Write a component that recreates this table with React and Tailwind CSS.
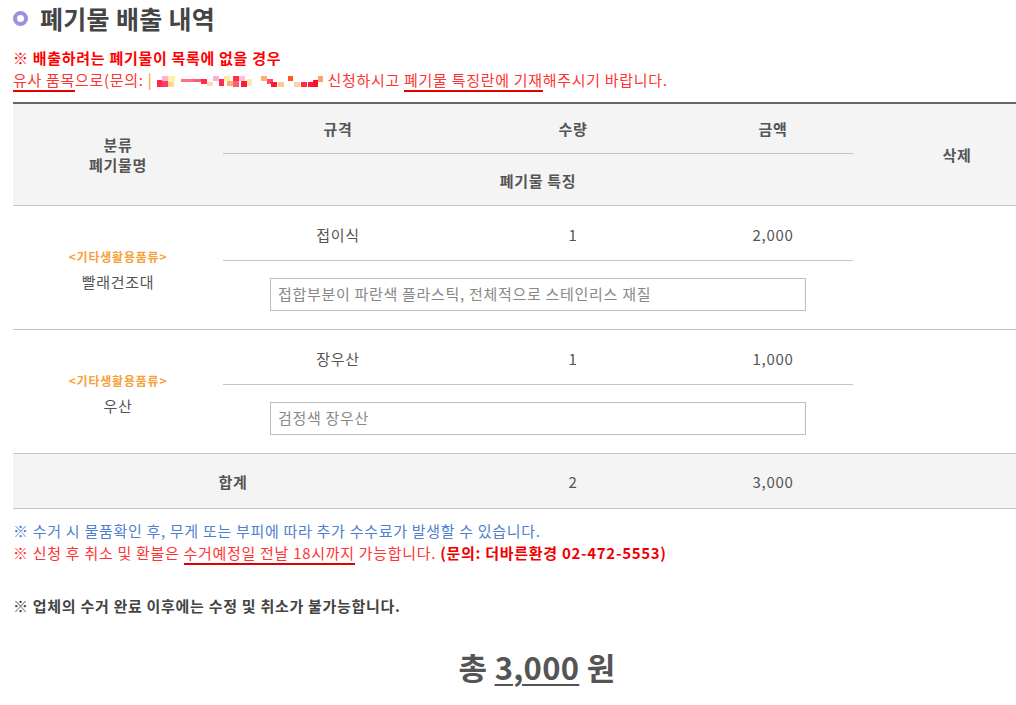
import React from "react";

const Mosaic = () => {
  const blocks = [
    [0, 4, 5, 7, "#ff2a48"], [5, 0, 6, 5, "#ffb0cc"], [5, 5, 6, 6, "#ff3a68"], [11, 0, 7, 6, "#fff0a8"], [11, 6, 6, 5, "#ffd890"],
    [24, 3, 12, 3, "#ff7088"], [36, 3, 8, 3, "#ff5878"], [44, 3, 6, 5, "#ff2a50"], [50, 6, 6, 4, "#ffd8b0"],
    [56, 0, 6, 5, "#ffb0cc"], [62, 3, 5, 7, "#ff2a5a"], [67, 0, 6, 5, "#ffec9c"], [70, 5, 6, 5, "#ffb070"],
    [76, 0, 6, 5, "#ff3048"], [76, 5, 6, 6, "#ff5878"], [82, 0, 6, 5, "#ffc0d8"], [84, 5, 6, 6, "#ff1838"], [90, 3, 5, 7, "#ffe8b0"],
    [104, 0, 6, 5, "#ffb070"], [110, 3, 6, 5, "#ff4870"], [114, 6, 6, 5, "#ff1830"], [121, 6, 6, 5, "#ffc890"],
    [131, 0, 5, 5, "#ff5820"], [137, 6, 6, 5, "#ffd0a8"], [144, 6, 6, 5, "#ff2a40"], [151, 6, 5, 5, "#ff1838"],
    [156, 4, 5, 7, "#ff1028"], [161, 0, 5, 6, "#ffa070"],
  ];
  return (
    <svg width="167" height="11" viewBox="0 0 167 11" className="inline-block align-[-1px] mx-[4px]">
      {blocks.map(([x, y, w, h, c], i) => (
        <rect key={i} x={x} y={y} width={w} height={h} fill={c} />
      ))}
    </svg>
  );
};

export default function App() {
  const font = { fontFamily: '"Noto Sans CJK KR", "Noto Sans", sans-serif' };
  const rows = [
    { name: "빨래건조대", spec: "접이식", qty: "1", price: "2,000", desc: "접합부분이 파란색 플라스틱, 전체적으로 스테인리스 재질" },
    { name: "우산", spec: "장우산", qty: "1", price: "1,000", desc: "검정색 장우산" },
  ];
  return (
    <div className="w-[1016px] h-[705px] overflow-hidden bg-white pl-[13px] text-[#555]" style={font}>
      <div className="w-[1048px]">
        <div className="h-[36px] flex items-center">
          <span className="w-[15px] h-[15px] rounded-full border-[4px] border-[#9d91d8] mr-[12px]"></span>
          <h1 className="text-[25px] font-bold text-[#444] leading-none tracking-[0.3px]">폐기물 배출 내역</h1>
        </div>
        <div className="mt-[11px] text-[15px] leading-[22px] tracking-[0.7px]">
          <p className="font-bold text-[#ff0000]">※ 배출하려는 폐기물이 목록에 없을 경우</p>
          <p className="text-[#ff3333] whitespace-nowrap">
            <span className="border-b-2 border-[#e00000]">유사 품목</span>으로(문의: <span className="text-[#ff8c1a]">|</span>
            <Mosaic />
            신청하시고 <span className="border-b-2 border-[#e00000]">폐기물 특징란에 기재</span>해주시기 바랍니다.
          </p>
        </div>
        <table className="mt-[11px] w-[1048px] border-collapse table-fixed text-[15px] tracking-[0.7px]">
          <colgroup>
            <col className="w-[210px]" />
            <col className="w-[230px]" />
            <col className="w-[240px]" />
            <col className="w-[160px]" />
            <col className="w-[208px]" />
          </colgroup>
          <thead>
            <tr className="bg-[#f4f4f4] border-t-2 border-[#666]">
              <th rowSpan={2} className="font-bold text-[#555] leading-[20px] align-middle pt-[2px]">분류<br />폐기물명</th>
              <th className="h-[50px] font-bold text-[#555] border-b border-[#c4c4c4] align-middle pt-[2px]">규격</th>
              <th className="font-bold text-[#555] border-b border-[#c4c4c4] align-middle pt-[2px]">수량</th>
              <th className="font-bold text-[#555] border-b border-[#c4c4c4] align-middle pt-[2px]">금액</th>
              <th rowSpan={2} className="font-bold text-[#555] align-middle pt-[2px]">삭제</th>
            </tr>
            <tr className="bg-[#f4f4f4] border-b border-[#c4c4c4]">
              <th colSpan={3} className="h-[52px] font-bold text-[#555] align-middle pt-[4px]">폐기물 특징</th>
            </tr>
          </thead>
          <tbody>
            {rows.map((r, i) => (
              <React.Fragment key={i}>
                <tr>
                  <td rowSpan={2} className="text-center align-middle border-b border-[#c4c4c4] pt-[6px]">
                    <div className="text-[12px] font-bold text-[#f7a13a] leading-[18px] tracking-[0.8px]">&lt;기타생활용품류&gt;</div>
                    <div className="text-[15px] text-[#555] leading-[20px] mt-[6px]">{r.name}</div>
                  </td>
                  <td className="h-[55px] text-center border-b border-[#c4c4c4] pt-[5px]">{r.spec}</td>
                  <td className="text-center border-b border-[#c4c4c4] pt-[5px]">{r.qty}</td>
                  <td className="text-center border-b border-[#c4c4c4] pt-[5px]">{r.price}</td>
                  <td rowSpan={2} className="border-b border-[#c4c4c4]"></td>
                </tr>
                <tr className="border-b border-[#c4c4c4]">
                  <td colSpan={3} className="h-[69px] align-middle">
                    <div className="mx-auto w-[536px] h-[33px] border border-[#bdbdbd] flex items-center px-[7px] text-[15px] text-[#888]">
                      {r.desc}
                    </div>
                  </td>
                </tr>
              </React.Fragment>
            ))}
            <tr className="bg-[#f4f4f4] border-b border-[#c4c4c4]">
              <td colSpan={2} className="h-[55px] text-center font-bold text-[#555] pt-[3px]">합계</td>
              <td className="text-center pt-[3px]">2</td>
              <td className="text-center pt-[3px]">3,000</td>
              <td></td>
            </tr>
          </tbody>
        </table>
        <div className="mt-[11px] text-[15px] leading-[22px] tracking-[0.7px] whitespace-nowrap">
          <p className="text-[#4f7fd0]">※ 수거 시 물품확인 후, 무게 또는 부피에 따라 추가 수수료가 발생할 수 있습니다.</p>
          <p className="text-[#ff3333]">
            ※ 신청 후 취소 및 환불은 <span className="border-b-2 border-[#e00000]">수거예정일 전날 18시까지</span> 가능합니다.{" "}
            <span className="font-bold text-[#ee0000]">(문의: 더바른환경 02-472-5553)</span>
          </p>
        </div>
        <p className="mt-[31px] text-[15px] leading-[22px] tracking-[0.7px] font-bold text-[#444]">※ 업체의 수거 완료 이후에는 수정 및 취소가 불가능합니다.</p>
        <div className="mt-[30px] h-[40px] flex items-center justify-center">
          <span className="text-[31px] font-bold text-[#555] leading-none tracking-[0.3px]">
            총 <span className="underline decoration-2 underline-offset-[4px]">3,000</span> 원
          </span>
        </div>
      </div>
    </div>
  );
}
